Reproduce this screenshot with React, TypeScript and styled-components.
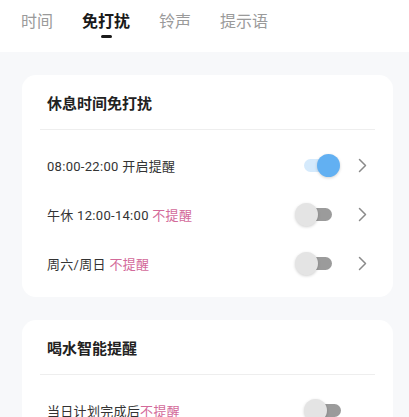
import styled, { createGlobalStyle } from "styled-components";

const GlobalStyle = createGlobalStyle`
    html, body {
        margin: 0;
        padding: 0;
        background: #f7f8fa;
        font-family: "Roboto", "Noto Sans CJK SC", sans-serif;
    }
`

const Page = styled.div`
    width: 409px;
    min-height: 417px;
    background: #f7f8fa;
`
const TabBar = styled.div`
    height: 52px;
    box-sizing: border-box;
    background: #fff;
    display: flex;
    gap: 29px;
    padding: 12px 0 0 21px;
`
const Tab = styled.div<{ $active?: boolean }>`
    display: flex;
    flex-direction: column;
    align-items: center;
    font-size: 16px;
    line-height: 20px;
    color: ${p => p.$active ? "#1a1a1a" : "#9a9a9a"};
    font-weight: ${p => p.$active ? 700 : 400};
    & i {
        display: block;
        width: 11px;
        height: 3px;
        margin-top: 3px;
        border-radius: 2px;
        background: ${p => p.$active ? "#1a1a1a" : "transparent"};
    }
`
const Content = styled.div`
    display: flex;
    flex-direction: column;
    gap: 23px;
    padding: 23px 16px 0 22px;
`
const Card = styled.div`
    background: #fff;
    border-radius: 14px;
    padding: 0 18px 9px;
`
const CardTitle = styled.div`
    height: 54px;
    display: flex;
    align-items: center;
    padding-left: 7px;
    font-size: 15px;
    font-weight: 700;
    color: #222;
    border-bottom: 1px solid #eeeeee;
`
const Rows = styled.div`
    padding-top: 11px;
`
const Row = styled.div`
    height: 49px;
    display: flex;
    align-items: center;
    padding: 0 8px 0 7px;
`
const Label = styled.div`
    flex: 1;
    font-size: 13px;
    letter-spacing: 0.3px;
    color: #333;
    & em {
        font-style: normal;
        color: #d36a9a;
    }
`
const Track = styled.div<{ $on?: boolean }>`
    position: relative;
    width: 28px;
    height: 13px;
    border-radius: 7px;
    margin-right: 26px;
    background: ${p => p.$on ? "#d5eafc" : "#9b9b9b"};
`
const Thumb = styled.div<{ $on?: boolean }>`
    position: absolute;
    top: -5px;
    ${p => p.$on ? "right: -8px;" : "left: -9px;"}
    width: 23px;
    height: 23px;
    border-radius: 50%;
    background: ${p => p.$on ? "#62b0f2" : "#e4e4e4"};
    box-shadow: 0 1px 3px rgba(0, 0, 0, 0.18);
`

const Chevron = () => (
    <svg width="9" height="15" viewBox="0 0 9 15">
        <path d="M1.5 1.5 L7.5 7.5 L1.5 13.5" fill="none" stroke="#8a8a8a" strokeWidth="1.5" strokeLinecap="round" strokeLinejoin="round" />
    </svg>
)

const Switch = (props: { on?: boolean }) => (
    <Track $on={props.on}>
        <Thumb $on={props.on} />
    </Track>
)

export default function App() {
    return (
        <Page>
            <GlobalStyle />
            <TabBar>
                <Tab>时间<i /></Tab>
                <Tab $active>免打扰<i /></Tab>
                <Tab>铃声<i /></Tab>
                <Tab>提示语<i /></Tab>
            </TabBar>
            <Content>
                <Card>
                    <CardTitle>休息时间免打扰</CardTitle>
                    <Rows>
                        <Row>
                            <Label>08:00-22:00 开启提醒</Label>
                            <Switch on />
                            <Chevron />
                        </Row>
                        <Row>
                            <Label>午休 12:00-14:00 <em>不提醒</em></Label>
                            <Switch />
                            <Chevron />
                        </Row>
                        <Row>
                            <Label>周六/周日 <em>不提醒</em></Label>
                            <Switch />
                            <Chevron />
                        </Row>
                    </Rows>
                </Card>
                <Card>
                    <CardTitle>喝水智能提醒</CardTitle>
                    <Rows>
                        <Row>
                            <Label>当日计划完成后<em>不提醒</em></Label>
                            <Switch />
                        </Row>
                    </Rows>
                </Card>
            </Content>
        </Page>
    )
}
